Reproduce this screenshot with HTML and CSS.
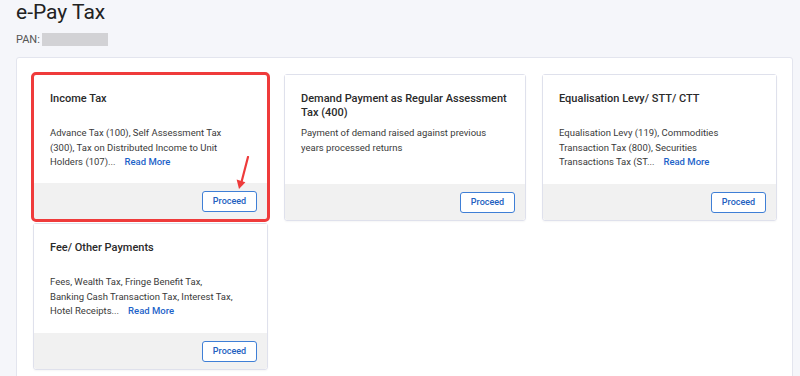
FILE: index.html
```html
<!doctype html>
<html lang="en">
<head>
    <meta charset="utf-8">
    <title>e-Pay Tax</title>
    <link rel="stylesheet" href="styles.css">
</head>
<body>
	<div class="pagina">
		<h1 class="titulo">e-Pay Tax</h1>
		<div class="pan">PAN: <span class="pan-oculto"></span></div>

		<div class="panel">
			<div class="tarjetas">
				<div class="tarjeta resaltada">
					<div class="cuerpo">
						<h3>Income Tax</h3>
						<p>Advance Tax (100), Self Assessment Tax (300), Tax on Distributed Income to Unit Holders (107)...<a href="#">Read More</a></p>
					</div>
					<div class="pie"><button class="boton">Proceed</button></div>
					<svg class="flecha" width="20" height="36" viewBox="0 0 20 36">
						<line x1="15" y1="1" x2="8.5" y2="26" stroke="#ee3b3b" stroke-width="2.2" stroke-linecap="round"/>
						<polygon points="3.6,23.6 12.4,26.2 6,33" fill="#ee3b3b"/>
					</svg>
				</div>
				<div class="tarjeta">
					<div class="cuerpo">
						<h3>Demand Payment as Regular Assessment Tax (400)</h3>
						<p>Payment of demand raised against previous years processed returns</p>
					</div>
					<div class="pie"><button class="boton">Proceed</button></div>
				</div>
				<div class="tarjeta">
					<div class="cuerpo">
						<h3>Equalisation Levy/ STT/ CTT</h3>
						<p>Equalisation Levy (119), Commodities Transaction Tax (800), Securities Transactions Tax (ST...<a href="#">Read More</a></p>
					</div>
					<div class="pie"><button class="boton">Proceed</button></div>
				</div>
				<div class="tarjeta">
					<div class="cuerpo">
						<h3>Fee/ Other Payments</h3>
						<p>Fees, Wealth Tax, Fringe Benefit Tax, Banking Cash Transaction Tax, Interest Tax, Hotel Receipts...<a href="#">Read More</a></p>
					</div>
					<div class="pie"><button class="boton">Proceed</button></div>
				</div>
			</div>
		</div>
	</div>
</body>
</html>
```
FILE: styles.css
```css
body{
	margin: 0;
	background-color: #f5f6fa;
	font-family: Roboto, "Liberation Sans", sans-serif;
	color: #333;
	overflow: hidden;
}
.pagina{
	padding: 0 7px 0 16px;
}
.titulo{
	margin: 0;
	font-size: 21px;
	font-weight: 400;
	line-height: 24px;
	color: #222;
}
.pan{
	margin-top: 8px;
	font-size: 11px;
	color: #555;
	display: flex;
	align-items: center;
	height: 14px;
}
.pan-oculto{
	display: inline-block;
	width: 66px;
	height: 13px;
	margin-left: 2px;
	background-color: #d2d2d5;
}
.panel{
	margin-top: 11px;
	background-color: #fff;
	border: 1px solid #e3e5ee;
	border-radius: 3px;
	padding: 16px 16px 20px 16px;
	height: 400px;
}
.tarjetas{
	display: grid;
	grid-template-columns: 235px 242px 235px;
	column-gap: 16px;
	row-gap: 2px;
}
.tarjeta{
	position: relative;
	display: flex;
	flex-direction: column;
	height: 147px;
	border: 1px solid #dfe1ec;
	border-radius: 3px;
	box-sizing: border-box;
	box-shadow: 0 1px 2px rgba(0,0,0,0.04);
}
.resaltada{
	outline: 3px solid #ef3b3b;
	outline-offset: -1px;
	height: 146px;
}
.cuerpo{
	flex: 1;
	padding: 16px 16px 0 16px;
	background-color: #fff;
}
.cuerpo h3{
	margin: 0;
	font-size: 11px;
	font-weight: 500;
	line-height: 14px;
	min-height: 28px;
	color: #2a2a2a;
	padding-top: 1px;
}
.cuerpo p{
	margin: 6px 0 0 0;
	padding-right: 14px;
	font-size: 9.5px;
	line-height: 14.5px;
	color: #3a3a3a;
}
.cuerpo a{
	display: inline-block;
	margin-left: 9px;
	color: #1d63c9;
	font-weight: 500;
	text-decoration: none;
}
.pie{
	height: 36px;
	background-color: #f1f1f1;
	display: flex;
	align-items: center;
	justify-content: flex-end;
	padding-right: 10px;
	border-radius: 0 0 3px 3px;
}
.boton{
	width: 55px;
	height: 21px;
	border: 1px solid #3f7fd6;
	border-radius: 3px;
	background-color: #fff;
	color: #2260bf;
	font-family: Roboto, "Liberation Sans", sans-serif;
	font-size: 9px;
	font-weight: 500;
	padding: 0;
}
.flecha{
	position: absolute;
	left: 199px;
	top: 81px;
}
```
